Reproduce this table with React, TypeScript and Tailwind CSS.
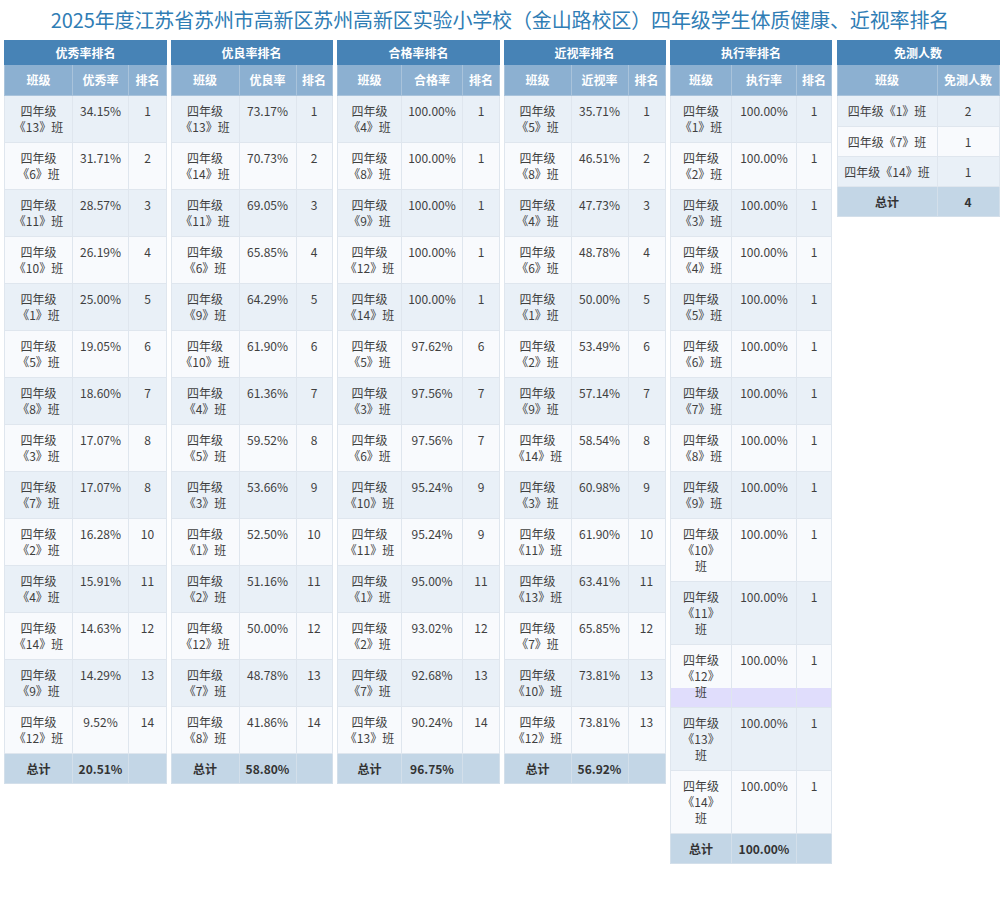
import React from "react";

type Row = { lines: string[]; val: string; rank?: string; special?: boolean };
type TableProps = {
  title: string;
  headers: string[];
  widths: number[];
  rows: Row[];
  total: string;
};

const mk = (data: [number, string, number][]): Row[] =>
  data.map(([n, v, r]) => ({ lines: ["四年级", `《${n}》班`], val: v, rank: String(r) }));

const t1 = mk([
  [13, "34.15%", 1], [6, "31.71%", 2], [11, "28.57%", 3], [10, "26.19%", 4], [1, "25.00%", 5],
  [5, "19.05%", 6], [8, "18.60%", 7], [3, "17.07%", 8], [7, "17.07%", 8], [2, "16.28%", 10],
  [4, "15.91%", 11], [14, "14.63%", 12], [9, "14.29%", 13], [12, "9.52%", 14],
]);
const t2 = mk([
  [13, "73.17%", 1], [14, "70.73%", 2], [11, "69.05%", 3], [6, "65.85%", 4], [9, "64.29%", 5],
  [10, "61.90%", 6], [4, "61.36%", 7], [5, "59.52%", 8], [3, "53.66%", 9], [1, "52.50%", 10],
  [2, "51.16%", 11], [12, "50.00%", 12], [7, "48.78%", 13], [8, "41.86%", 14],
]);
const t3 = mk([
  [4, "100.00%", 1], [8, "100.00%", 1], [9, "100.00%", 1], [12, "100.00%", 1], [14, "100.00%", 1],
  [5, "97.62%", 6], [3, "97.56%", 7], [6, "97.56%", 7], [10, "95.24%", 9], [11, "95.24%", 9],
  [1, "95.00%", 11], [2, "93.02%", 12], [7, "92.68%", 13], [13, "90.24%", 14],
]);
const t4 = mk([
  [5, "35.71%", 1], [8, "46.51%", 2], [4, "47.73%", 3], [6, "48.78%", 4], [1, "50.00%", 5],
  [2, "53.49%", 6], [9, "57.14%", 7], [14, "58.54%", 8], [3, "60.98%", 9], [11, "61.90%", 10],
  [13, "63.41%", 11], [7, "65.85%", 12], [10, "73.81%", 13], [12, "73.81%", 13],
]);
const t5: Row[] = Array.from({ length: 14 }, (_, i) => {
  const n = i + 1;
  return {
    lines: n >= 10 ? ["四年级", `《${n}》`, "班"] : ["四年级", `《${n}》班`],
    val: "100.00%",
    rank: "1",
    special: n === 12,
  };
});

const td = "border border-[#dfe6ee] px-[4px] py-[7px] text-center align-top leading-[16px] text-[12px] text-[#3f3f3f]";
const tdTotal = "border border-[#d3dfea] px-[4px] pt-[7px] pb-[6px] text-center align-middle leading-[16px] text-[12px] font-bold text-[#333]";
const th = "border border-[#a9c3db] px-[2px] py-[7px] text-center leading-[16px] text-[12px] font-bold text-white bg-[#8cb0d1]";
const cap = "bg-[#4783b6] text-white text-[12px] font-bold leading-[16px] pt-[4px] pb-[3px] text-center border border-[#4783b6]";

function RankTable({ title, headers, widths, rows, total }: TableProps) {
  return (
    <div className="flex-1 min-w-0">
      <table className="w-full table-fixed border-collapse border border-[#dfe6ee]">
        <colgroup>
          {widths.map((w, i) => (
            <col key={i} style={{ width: w }} />
          ))}
        </colgroup>
        <thead>
          <tr>
            <th colSpan={3} className={cap}>
              {title}
            </th>
          </tr>
          <tr>
            {headers.map((h) => (
              <th key={h} className={th}>{h}</th>
            ))}
          </tr>
        </thead>
        <tbody>
          {rows.map((r, i) => {
            const bg = r.special
              ? "bg-[linear-gradient(to_bottom,#f8fafd_43px,#e0ddfc_43px)]"
              : i % 2 === 0
              ? "bg-[#e9f0f7]"
              : "bg-[#f8fafd]";
            return (
              <tr key={i} className={bg}>
                <td className={td}>
                  {r.lines.map((l, j) => (
                    <div key={j} className="whitespace-nowrap">{l}</div>
                  ))}
                </td>
                <td className={td}>{r.val}</td>
                <td className={td}>{r.rank}</td>
              </tr>
            );
          })}
          <tr className="bg-[#c3d6e6]">
            <td className={tdTotal}>总计</td>
            <td className={tdTotal}>{total}</td>
            <td className={tdTotal}></td>
          </tr>
        </tbody>
      </table>
    </div>
  );
}

function ExemptTable() {
  const rows = [
    ["四年级《1》班", "2"],
    ["四年级《7》班", "1"],
    ["四年级《14》班", "1"],
  ];
  return (
    <div className="flex-1 min-w-0">
      <table className="w-full table-fixed border-collapse border border-[#dfe6ee]">
        <colgroup>
          <col style={{ width: 100 }} />
          <col style={{ width: 62 }} />
        </colgroup>
        <thead>
          <tr>
            <th colSpan={2} className={cap}>
              免测人数
            </th>
          </tr>
          <tr>
            <th className={th}>班级</th>
            <th className={th}>免测人数</th>
          </tr>
        </thead>
        <tbody>
          {rows.map((r, i) => (
            <tr key={i} className={i % 2 === 0 ? "bg-[#e9f0f7]" : "bg-[#f8fafd]"}>
              <td className={`${td} whitespace-nowrap ${i > 0 ? "pb-[6px]" : ""}`}>{r[0]}</td>
              <td className={`${td} ${i > 0 ? "pb-[6px]" : ""}`}>{r[1]}</td>
            </tr>
          ))}
          <tr className="bg-[#c3d6e6]">
            <td className={tdTotal}>总计</td>
            <td className={tdTotal}>4</td>
          </tr>
        </tbody>
      </table>
    </div>
  );
}

export default function App() {
  return (
    <div className="bg-white min-h-[899px] font-['Noto_Sans_CJK_SC','Microsoft_YaHei',sans-serif]">
      <div className="h-[40px] flex items-center justify-center text-[20px] tracking-[-0.13px] text-[#2f7db5] whitespace-nowrap">
        2025年度江苏省苏州市高新区苏州高新区实验小学校（金山路校区）四年级学生体质健康、近视率排名
      </div>
      <div className="flex items-start gap-[5px] pl-[4px] pr-[2px]">
        <RankTable title="优秀率排名" headers={["班级", "优秀率", "排名"]} widths={[68, 56, 38]} rows={t1} total="20.51%" />
        <RankTable title="优良率排名" headers={["班级", "优良率", "排名"]} widths={[68, 57, 36]} rows={t2} total="58.80%" />
        <RankTable title="合格率排名" headers={["班级", "合格率", "排名"]} widths={[64, 61, 37]} rows={t3} total="96.75%" />
        <RankTable title="近视率排名" headers={["班级", "近视率", "排名"]} widths={[67, 57, 37]} rows={t4} total="56.92%" />
        <RankTable title="执行率排名" headers={["班级", "执行率", "排名"]} widths={[61, 65, 35]} rows={t5} total="100.00%" />
        <ExemptTable />
      </div>
    </div>
  );
}
